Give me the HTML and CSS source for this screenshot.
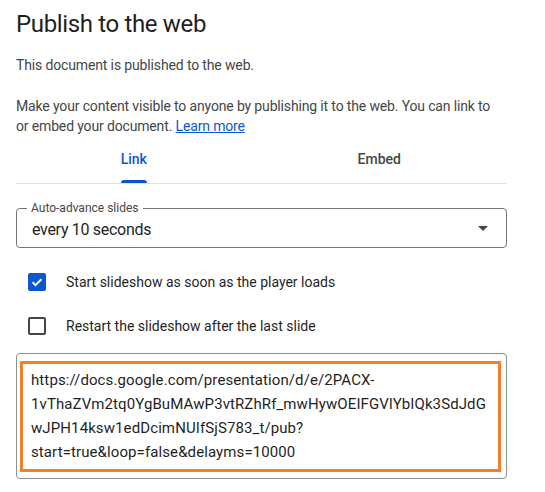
FILE: index.html
```html
<!DOCTYPE html>
<html lang="en">
<head>
<meta charset="utf-8">
<title>Publish to the web</title>
<link rel="stylesheet" href="styles.css">
</head>
<body>
<div class="dialog">
  <h1 class="title">Publish to the web</h1>
  <p class="status">This document is published to the web.</p>
  <p class="desc">Make your content visible to anyone by publishing it to the web. You can link to or embed your document. <a class="learn" href="#">Learn more</a></p>

  <div class="tabs">
    <div class="tabs-inner">
      <div class="tab active"><span class="tab-label">Link<span class="indicator"></span></span></div>
      <div class="tab"><span class="tab-label">Embed</span></div>
    </div>
  </div>

  <div class="select">
    <span class="select-label">Auto-advance slides</span>
    <span class="select-value">every 10 seconds</span>
    <svg class="caret" width="10" height="5" viewBox="0 0 10 5"><path d="M0 0h10L5 5z" fill="#444746"/></svg>
  </div>

  <div class="options">
    <label class="option">
      <span class="cb checked">
        <svg width="14" height="14" viewBox="0 0 14 14"><path d="M2.6 7.2l2.9 2.9 5.9-5.9" fill="none" stroke="#fff" stroke-width="2"/></svg>
      </span>
      <span class="option-text">Start slideshow as soon as the player loads</span>
    </label>
    <label class="option">
      <span class="cb"></span>
      <span class="option-text">Restart the slideshow after the last slide</span>
    </label>
  </div>

  <div class="urlbox">
    <div class="highlight">
      <div class="url">https://docs.google.com/presentation/d/e/2PACX-<br>1vThaZVm2tq0YgBuMAwP3vtRZhRf_mwHywOEIFGVlYbIQk3SdJdG<br>wJPH14ksw1edDcimNUIfSjS783_t/pub?<br>start=true&amp;loop=false&amp;delayms=10000</div>
    </div>
  </div>
</div>
</body>
</html>
```

FILE: styles.css
```css
* { box-sizing: border-box; }
html, body { margin: 0; padding: 0; background: #fff; }
body {
  font-family: Roboto, "Noto Sans", Arial, sans-serif;
  color: #1f1f1f;
}
.dialog {
  width: 545px;
  padding: 8px 38px 0 16px;
}
.title {
  margin: 0;
  font-size: 24px;
  line-height: 32px;
  font-weight: 400;
  letter-spacing: -0.35px;
  color: #1f1f1f;
}
.status {
  margin: 15px 0 0;
  font-size: 14px;
  line-height: 20px;
  letter-spacing: -0.14px;
  color: #444746;
}
.desc {
  margin: 21px 0 0;
  max-width: 480px;
  font-size: 14px;
  line-height: 20px;
  letter-spacing: -0.15px;
  color: #444746;
}
.learn {
  color: #0b57d0;
  text-decoration: underline;
}
.tabs {
  border-bottom: 1px solid #e1e3e1;
}
.tabs-inner {
  display: flex;
  margin: 0 5px 0 -5px;
}
.tab {
  flex: 1;
  height: 47px;
  display: flex;
  justify-content: center;
  align-items: center;
  font-size: 14px;
  font-weight: 500;
  color: #444746;
}
.tab-label {
  position: relative;
  height: 47px;
  line-height: 47px;
}
.tab.active { color: #0b57d0; }
.indicator {
  position: absolute;
  left: 0;
  right: 0;
  bottom: 0;
  height: 3px;
  background: #0b57d0;
  border-radius: 3px 3px 0 0;
}
.select {
  position: relative;
  margin-top: 24px;
  height: 40px;
  border: 1px solid #747775;
  border-radius: 4px;
  display: flex;
  align-items: center;
  padding: 0 18px 0 15px;
}
.select-label {
  position: absolute;
  left: 10px;
  top: -9px;
  padding: 0 4px;
  background: #fff;
  font-size: 12px;
  line-height: 16px;
  color: #444746;
}
.select-value {
  flex: 1;
  font-size: 16px;
  line-height: 24px;
  padding-top: 3px;
  letter-spacing: -0.3px;
  color: #1f1f1f;
}
.caret { display: block; }
.options {
  margin-top: 12px;
  display: flex;
  flex-direction: column;
}
.option {
  height: 44px;
  display: flex;
  align-items: center;
  padding-left: 12px;
}
.cb {
  width: 18px;
  height: 18px;
  border: 2px solid #444746;
  border-radius: 2px;
  display: flex;
  align-items: center;
  justify-content: center;
  flex: none;
}
.cb.checked {
  background: #0b57d0;
  border-color: #0b57d0;
}
.cb svg { display: block; }
.option-text {
  margin-left: 20px;
  font-size: 14px;
  line-height: 20px;
  color: #1f1f1f;
}
.urlbox {
  margin-top: 5px;
  border: 1px solid #8e918f;
  border-radius: 4px;
  padding: 7px 5px 6px 3px;
}
.highlight {
  border: 3px solid #f57f28;
  padding: 4px 8px 5px;
}
.url {
  font-size: 15px;
  line-height: 24px;
  letter-spacing: 0.1px;
  color: #1f1f1f;
  white-space: nowrap;
}
```
